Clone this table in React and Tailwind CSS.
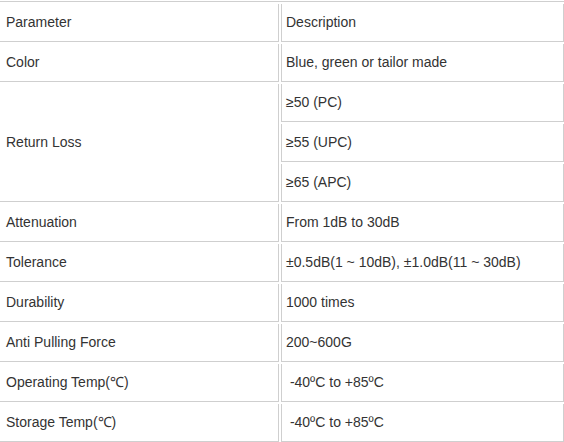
import { Fragment } from 'react'

const rows = [
  { param: 'Parameter', desc: ['Description'] },
  { param: 'Color', desc: ['Blue, green or tailor made'] },
  { param: 'Return Loss', desc: ['≥50 (PC)', '≥55 (UPC)', '≥65 (APC)'] },
  { param: 'Attenuation', desc: ['From 1dB to 30dB'] },
  { param: 'Tolerance', desc: ['±0.5dB(1 ~ 10dB), ±1.0dB(11 ~ 30dB)'] },
  { param: 'Durability', desc: ['1000 times'] },
  { param: 'Anti Pulling Force', desc: ['200~600G'] },
  { param: 'Operating Temp(℃)', desc: ['\u00a0-40ºC to +85ºC'] },
  { param: 'Storage Temp(℃)', desc: ['\u00a0-40ºC to +85ºC'] },
]

const App = () => {
  return (
    <div
      className="w-[564px] h-[442px] bg-white overflow-hidden text-[14px] text-[#333333]"
      style={{ fontFamily: '"Liberation Sans", Arial, sans-serif' }}
    >
      {/* table top rule */}
      <div className="mt-[1px] border-t border-[#cfcfcf]" />

      <div className="mt-[2px] grid grid-cols-[279px_283px] auto-rows-[38px] gap-x-[2px] gap-y-[2px]">
        {rows.map((row) => (
          <Fragment key={row.param}>
            <div
              className={`flex items-center pl-[6px] border-r border-b border-[#cfcfcf] ${
                row.desc.length === 3 ? 'row-span-3' : ''
              }`}
            >
              {row.param}
            </div>
            {row.desc.map((d) => (
              <div
                key={d}
                className="col-start-2 flex items-center pl-[4px] border-l border-r border-b border-[#cfcfcf] whitespace-pre"
              >
                {d}
              </div>
            ))}
          </Fragment>
        ))}
      </div>
    </div>
  )
}

export default App
